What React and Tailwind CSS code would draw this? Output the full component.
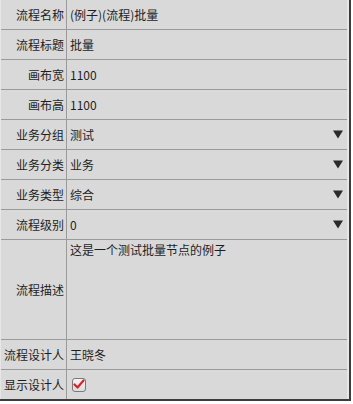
import React from "react";

const rows = [
  { label: "流程名称", value: "(例子)(流程)批量" },
  { label: "流程标题", value: "批量" },
  { label: "画布宽", value: "1100" },
  { label: "画布高", value: "1100" },
  { label: "业务分组", value: "测试", select: true },
  { label: "业务分类", value: "业务", select: true },
  { label: "业务类型", value: "综合", select: true },
  { label: "流程级别", value: "0", select: true },
];

const Triangle = () => (
  <svg width="10" height="9" viewBox="0 0 10 9" className="mr-[4px]">
    <path d="M0 0.5 L10 0.5 L5 8.5 Z" fill="#2a2a2a" />
  </svg>
);

const App = () => {
  return (
    <div
      className="bg-white w-[353px] h-[404px] text-[12px] text-[#1e1e1e]"
      style={{ fontFamily: '"Noto Sans CJK SC", "Microsoft YaHei", sans-serif' }}
    >
      <div className="w-[351px] bg-[#d9d9d9] border-r-2 border-b-2 border-[#3c3c3c]">
        <div className="border-r-2 border-l border-[#e6e6e6]">
          {rows.map((row) => (
            <div key={row.label} className="flex h-[30px] border-b border-[#9a9a9a]">
              <div className="w-[66px] border-r border-[#9a9a9a] flex items-center justify-end pr-[2px]">
                {row.label}
              </div>
              <div className="flex-1 flex items-center justify-between pl-[3px]">
                <span>{row.value}</span>
                {row.select && <Triangle />}
              </div>
            </div>
          ))}

          <div className="flex h-[100px] border-b border-[#9a9a9a]">
            <div className="w-[66px] border-r border-[#9a9a9a] flex items-center justify-end pr-[2px]">
              流程描述
            </div>
            <div className="flex-1 pl-[3px] pt-[2px] leading-[16px]">
              这是一个测试批量节点的例子
            </div>
          </div>

          <div className="flex h-[30px] border-b border-[#9a9a9a]">
            <div className="w-[66px] border-r border-[#9a9a9a] flex items-center justify-end pr-[2px] whitespace-nowrap">
              流程设计人
            </div>
            <div className="flex-1 flex items-center pl-[3px]">王晓冬</div>
          </div>

          <div className="flex h-[29px]">
            <div className="w-[66px] border-r border-[#9a9a9a] flex items-center justify-end pr-[2px] whitespace-nowrap">
              显示设计人
            </div>
            <div className="flex-1 flex items-center pl-[5px]">
              <div className="w-[14px] h-[14px] rounded-[3px] border border-[#7a7a7a] bg-gradient-to-b from-[#f4f4f4] to-[#dcdcdc] flex items-center justify-center">
                <svg width="12" height="11" viewBox="0 0 12 11">
                  <path
                    d="M1.5 5.5 L4.5 8.5 L10.5 1.5"
                    fill="none"
                    stroke="#d3262b"
                    strokeWidth="2.2"
                    strokeLinecap="round"
                    strokeLinejoin="round"
                  />
                </svg>
              </div>
            </div>
          </div>
        </div>
      </div>
    </div>
  );
};

export default App;
